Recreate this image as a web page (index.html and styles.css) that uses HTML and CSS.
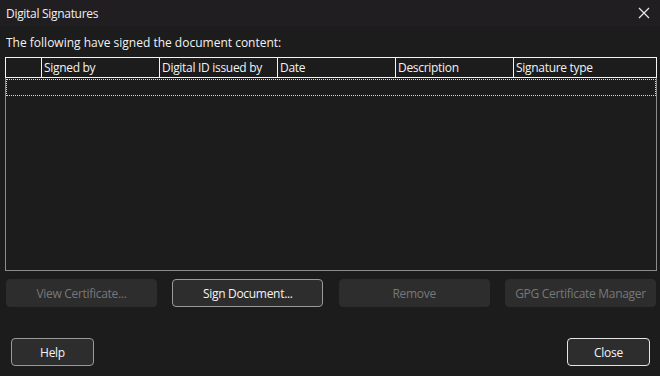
FILE: index.html
```html
<!DOCTYPE html>
<html lang="en">
<head>
  <meta charset="UTF-8" />
  <title>Digital Signatures</title>
  <link rel="stylesheet" href="styles.css">
</head>
<body>
  <div class="dialog">
    <div class="titlebar">
      <span class="title">Digital Signatures</span>
      <svg class="close-x" width="12" height="12" viewBox="0 0 12 12">
        <path d="M1 1 L11 11 M11 1 L1 11" stroke="#e8e8e8" stroke-width="1.2" fill="none"/>
      </svg>
    </div>

    <div class="content">
      <div class="caption">The following have signed the document content:</div>

      <div class="sig-table">
        <div class="sig-head">
          <div class="col col-icon"></div>
          <div class="col">Signed by</div>
          <div class="col">Digital ID issued by</div>
          <div class="col">Date</div>
          <div class="col">Description</div>
          <div class="col col-last">Signature type</div>
        </div>
        <div class="sig-body">
          <div class="focus-row"></div>
        </div>
      </div>

      <div class="actions">
        <button class="btn" disabled>View Certificate...</button>
        <button class="btn">Sign Document...</button>
        <button class="btn" disabled>Remove</button>
        <button class="btn" disabled>GPG Certificate Manager</button>
      </div>

      <div class="footer">
        <button class="btn small">Help</button>
        <button class="btn small default">Close</button>
      </div>
    </div>
  </div>
</body>
</html>
```

FILE: styles.css
```css
* {
  box-sizing: border-box;
}

body {
  margin: 0;
  background: #1c1c1c;
  font-family: 'Open Sans', 'Noto Sans', sans-serif;
  font-size: 12px;
  letter-spacing: -0.3px;
  color: #f2f2f2;
}

.dialog {
  width: 660px;
  height: 376px;
  display: flex;
  flex-direction: column;
}

.titlebar {
  height: 26px;
  background: #201e21;
  display: flex;
  align-items: center;
  justify-content: space-between;
  padding: 0 10px 0 6px;
}

.title {
  color: #f0f0f0;
}

.close-x {
  display: block;
}

.content {
  flex: 1;
  display: flex;
  flex-direction: column;
  padding: 9px 3px 0 5px;
}

.caption {
  height: 22px;
  padding-left: 1px;
  line-height: 16px;
  letter-spacing: 0;
}

.sig-table {
  height: 214px;
  border: 1px solid #8c8c8c;
  display: flex;
  flex-direction: column;
}

.sig-head {
  display: flex;
  height: 21px;
  border: 1px solid #f4f4f4;
  margin: -1px -1px 0 -1px;
}

.col {
  width: 118px;
  border-left: 1px solid #f4f4f4;
  padding-left: 2px;
  line-height: 19px;
  white-space: nowrap;
  overflow: hidden;
}

.col-icon {
  width: 35px;
  border-left: none;
}

.col-last {
  flex: 1;
}

.sig-body {
  flex: 1;
  padding: 1px 0 0 0;
}

.focus-row {
  height: 17px;
  border: 1px dotted #d8d8d8;
}

.actions {
  display: grid;
  grid-template-columns: repeat(4, 151px);
  justify-content: space-between;
  margin: 8px 1px 0 1px;
}

.btn {
  height: 28px;
  font-family: inherit;
  font-size: 12px;
  letter-spacing: -0.3px;
  color: #f4f4f4;
  background: #2d2d2d;
  border: 1px solid #9a9a9a;
  border-radius: 4px;
  padding: 0;
}

.btn:disabled {
  color: #787878;
  border-color: #2d2d2d;
}

.footer {
  display: flex;
  justify-content: space-between;
  margin: 31px 7px 0 6px;
}

.btn.small {
  width: 83px;
}

.btn.default {
  border-color: #e6e6e6;
}
```
